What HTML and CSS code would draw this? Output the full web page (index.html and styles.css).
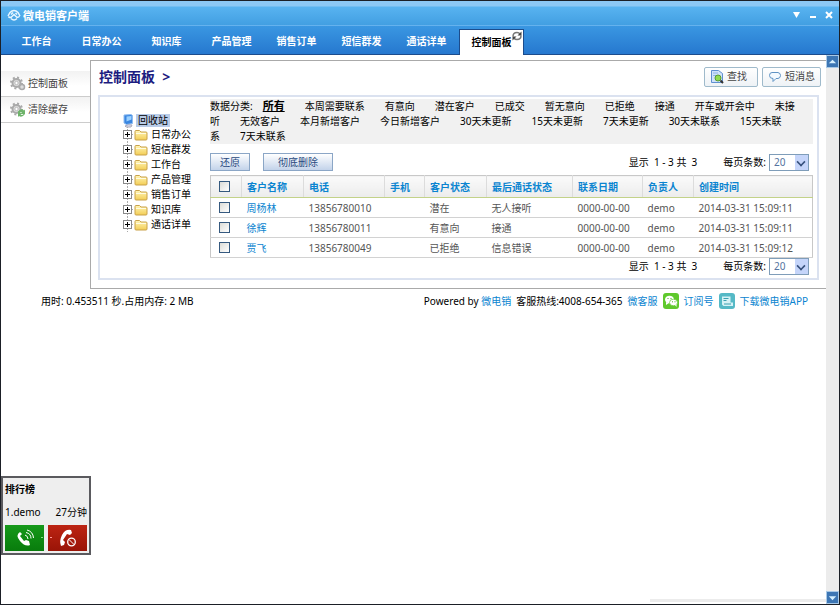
FILE: index.html
```html
<!DOCTYPE html>
<html lang="zh-CN">
<head>
<meta charset="utf-8">
<title>微电销客户端</title>
<link rel="stylesheet" href="styles.css">
</head>
<body>
<svg class="defs" aria-hidden="true">
  <defs>
    <linearGradient id="fold" x1="0" y1="0" x2="0" y2="1"><stop offset="0" stop-color="#fff6b8"/><stop offset="1" stop-color="#f3cd55"/></linearGradient>
    <symbol id="plus" viewBox="0 0 12 15">
      <path d="M5.500 0v3M5.500 12v3M10 7.500h2" stroke="#aaa" stroke-dasharray="1 1"/>
      <rect x="1.500" y="3.500" width="8" height="8" fill="#fff" stroke="#8a8a8a"/>
      <path d="M3 7.500h5M5.500 5v5" stroke="#000"/>
    </symbol>
    <symbol id="folder" viewBox="0 0 14 12">
      <path d="M1 10V2.500Q1 1.500 2 1.500h3.500l1.500 1.500h5q1 0 1 1V10q0 1-1 1H2q-1 0-1-1z" fill="url(#fold)" stroke="#c9a24a"/>
      <path d="M2 4.500h10" stroke="#fffbe0"/>
    </symbol>
    <symbol id="gear" viewBox="0 0 16 16">
      <circle cx="6.500" cy="7" r="4" fill="#ddd" stroke="#aaa" stroke-width="2"/>
      <circle cx="6.500" cy="7" r="5.500" fill="none" stroke="#aaa" stroke-width="2" stroke-dasharray="2 2.300"/>
      <circle cx="6.500" cy="7" r="1.700" fill="#fff" stroke="#bbb"/>
    </symbol>
  </defs>
</svg>
<div class="window">
  <header class="titlebar">
    <svg class="logo" viewBox="0 0 14 12"><path d="M1 7L3 3.500Q7-.5 11 3.500L13 7M1.500 7.500Q2.500 9 4.500 8L7 5.500 9.500 8Q11.500 9 12.500 7M4 9.500q3 3 6 0M4 5.500L6 3.500M10 5.500L8.500 4" fill="none" stroke="#e8f6ff" stroke-width="1.500"/></svg>
    <h1 class="app-name">微电销客户端</h1>
    <div class="win-buttons">
      <button type="button" aria-label="菜单"><svg viewBox="0 0 8 8"><path d="M0 1h7L3.500 7z" fill="#fff"/></svg></button>
      <button type="button" aria-label="最小化"><svg viewBox="0 0 8 8"><path d="M1 6h6" stroke="#fff" stroke-width="2"/></svg></button>
      <button type="button" aria-label="关闭"><svg viewBox="0 0 8 8"><path d="M1 1l6 6M7 1L1 7" stroke="#fff" stroke-width="2"/></svg></button>
    </div>
  </header>
  <nav class="tabs">
    <a href="#">工作台</a>
    <a href="#">日常办公</a>
    <a href="#">知识库</a>
    <a href="#">产品管理</a>
    <a href="#">销售订单</a>
    <a href="#">短信群发</a>
    <a href="#">通话详单</a>
    <a href="#" class="active">控制面板<svg class="refresh" viewBox="0 0 10 10"><path d="M1 5.500Q1 1.500 5 1.500q2 0 3 1.500M9 4.500Q9 8.500 5 8.500 3 8.500 2 7" fill="none" stroke="#777" stroke-width="1.500"/><path d="M9.500.5v4h-4zM.5 9.500v-4h4z" fill="#444"/></svg></a>
  </nav>
  <div class="viewport">
    <div class="page">
      <div class="columns">
        <aside class="side">
          <a href="#"><svg viewBox="0 0 16 16"><use href="#gear"/><circle cx="12" cy="11" r="2.500" fill="#ddd" stroke="#aaa" stroke-width="1.500"/></svg>控制面板</a>
          <a href="#"><svg viewBox="0 0 16 16"><use href="#gear"/><path d="M7.500 10q3.500-4.500 6.500-1.500l1-1v4.500h-4.500l1.500-1.500Q10.500 9.500 9 11.500zM15 12q-3 4-6 2l-1 1V11h4l-1.500 1.500q2 1 3-.5z" fill="#6eb36a"/></svg>清除缓存</a>
        </aside>
        <main class="panel">
          <div class="panel-head">
            <h2>控制面板&nbsp; &gt;</h2>
            <button type="button" class="tool"><svg viewBox="0 0 14 15"><path d="M1.500 1.500h7l4 3v9h-11z" fill="#cfe2fa" stroke="#5f8fd0"/><path d="M3 4h5M3 6.500h3" stroke="#8fb4e6"/><circle cx="8" cy="9" r="3" fill="#8fdc4e" stroke="#5a9a35"/><path d="M10.500 11.500l2.500 2.500" stroke="#333" stroke-width="2"/></svg>查找</button>
            <button type="button" class="tool"><svg viewBox="0 0 14 15"><path d="M4 3.500h6q2.500.5 2.500 3T10 9.500H8L5 12.500v-3Q1.500 9.500 1.500 6.500T4 3.500z" fill="#f4faff" stroke="#5f93c4"/></svg>短消息</button>
          </div>
          <div class="box">
            <div class="tree">
              <div class="root"><svg viewBox="0 0 12 14"><path d="M2 1l7-0.500 1.500 1v8l-6 1L2 9z" fill="#3a86e0" stroke="#8fbcf0"/><path d="M4.500 2.500l5-.5v3.500l-5 2z" fill="#9ad0ff"/><path d="M3 12q3-2 7-1l-1 2H4z" fill="#dde" stroke="#aab"/></svg><span>回收站</span></div>
              <ul>
                <li><svg class="p"><use href="#plus"/></svg><svg class="f"><use href="#folder"/></svg>日常办公</li>
                <li><svg class="p"><use href="#plus"/></svg><svg class="f"><use href="#folder"/></svg>短信群发</li>
                <li><svg class="p"><use href="#plus"/></svg><svg class="f"><use href="#folder"/></svg>工作台</li>
                <li><svg class="p"><use href="#plus"/></svg><svg class="f"><use href="#folder"/></svg>产品管理</li>
                <li><svg class="p"><use href="#plus"/></svg><svg class="f"><use href="#folder"/></svg>销售订单</li>
                <li><svg class="p"><use href="#plus"/></svg><svg class="f"><use href="#folder"/></svg>知识库</li>
                <li><svg class="p"><use href="#plus"/></svg><svg class="f"><use href="#folder"/></svg>通话详单</li>
              </ul>
            </div>
            <div class="data">
              <div class="filter"><span class="label">数据分类:</span><a href="#" class="current">所有</a><a href="#">本周需要联系</a><a href="#">有意向</a><a href="#">潜在客户</a><a href="#">已成交</a><a href="#">暂无意向</a><a href="#">已拒绝</a><a href="#">接通</a><a href="#">开车或开会中</a><a href="#">未接<br>听</a><a href="#">无效客户</a><a href="#">本月新增客户</a><a href="#">今日新增客户</a><a href="#">30天未更新</a><a href="#">15天未更新</a><a href="#">7天未更新</a><a href="#">30天未联系</a><a href="#">15天未联<br>系</a><a href="#">7天未联系</a></div>
              <div class="bar">
                <button type="button" class="btn">还原</button>
                <button type="button" class="btn wide">彻底删除</button>
                <div class="pager"><span>显示&nbsp; 1 - 3 共&nbsp; 3</span><label for="size1">每页条数:</label><span class="pick"><select id="size1"><option>20</option></select></span></div>
              </div>
              <table>
                <colgroup><col class="c-check"><col class="c-name"><col class="c-phone"><col class="c-mobile"><col class="c-name"><col class="c-last"><col class="c-date"><col class="c-owner"><col></colgroup>
                <thead><tr><th><input type="checkbox" aria-label="全选"></th><th>客户名称</th><th>电话</th><th>手机</th><th>客户状态</th><th>最后通话状态</th><th>联系日期</th><th>负责人</th><th>创建时间</th></tr></thead>
                <tbody>
                  <tr><td><input type="checkbox" aria-label="周杨林"></td><td><a href="#">周杨林</a></td><td>13856780010</td><td></td><td>潜在</td><td>无人接听</td><td>0000-00-00</td><td>demo</td><td>2014-03-31 15:09:11</td></tr>
                  <tr><td><input type="checkbox" aria-label="徐辉"></td><td><a href="#">徐辉</a></td><td>13856780011</td><td></td><td>有意向</td><td>接通</td><td>0000-00-00</td><td>demo</td><td>2014-03-31 15:09:11</td></tr>
                  <tr><td><input type="checkbox" aria-label="贾飞"></td><td><a href="#">贾飞</a></td><td>13856780049</td><td></td><td>已拒绝</td><td>信息错误</td><td>0000-00-00</td><td>demo</td><td>2014-03-31 15:09:12</td></tr>
                </tbody>
              </table>
              <div class="pager"><span>显示&nbsp; 1 - 3 共&nbsp; 3</span><label for="size2">每页条数:</label><span class="pick"><select id="size2"><option>20</option></select></span></div>
            </div>
          </div>
        </main>
      </div>
      <footer class="foot">
        <span class="usage">用时: 0.453511 秒.占用内存: 2 MB</span>
        <span>Powered by <a href="#">微电销</a></span>
        <span>客服热线:4008-654-365</span>
        <a href="#">微客服</a>
        <svg viewBox="0 0 16 16"><rect width="16" height="16" rx="3" fill="#5fc92c"/><ellipse cx="6.500" cy="6.500" rx="4.500" ry="3.800" fill="#fff"/><path d="M3 9v3l3-2z" fill="#fff"/><ellipse cx="10.500" cy="9.500" rx="4" ry="3.300" fill="#fff" stroke="#5fc92c" stroke-width=".7"/><path d="M12 12l1.500 2V11z" fill="#fff"/><path d="M4.500 5.500h1M7.500 5.500h1M9 8.800h1M11.500 8.800h1" stroke="#4bab20"/></svg>
        <a href="#">订阅号</a>
        <svg viewBox="0 0 16 16"><rect width="16" height="16" rx="3" fill="#55b9c6"/><path d="M3 3.500h8.500v6H14V13H4.500L3 11.500z" fill="#d5f2f6"/><path d="M4.500 5.500h5M4.500 7.500h3M5 11h7" stroke="#3aa0b0"/></svg>
        <a href="#">下载微电销APP</a>
      </footer>
      <div class="strip"></div>
    </div>
    <div class="scroll">
      <button type="button" aria-label="向上"><svg viewBox="0 0 12 12"><path d="M2 8h8L6 4z" fill="#d6f0ff"/></svg></button>
      <button type="button" aria-label="向下"><svg viewBox="0 0 12 12"><path d="M2 4.500h8L6 9z" fill="#d6f0ff"/></svg></button>
    </div>
  </div>
  <section class="rank">
    <h3>排行榜</h3>
    <div class="score"><span>1.demo</span><span>27分钟</span></div>
    <div class="calls">
      <button type="button" class="call" aria-label="拨打"><svg viewBox="0 0 39 26"><path d="M15 7q-5 3 0 9t10 4l-1-4-3-1-2 1-4-5 2-2z" fill="#fff"/><path d="M20 10q3 1 3 4M21 7.500q5 1 5 6M22 5q6 1.500 6.500 8" fill="none" stroke="#fff"/><path d="M36 12.500h2" stroke="#8d8"/></svg></button>
      <button type="button" class="hang" aria-label="挂断"><svg viewBox="0 0 39 26"><path d="M23 5q-6-1-9 5t-1 11l3-1 1-3-2-2 4-6 3 1 2-2z" fill="#fff"/><circle cx="23.500" cy="17" r="3.800" fill="none" stroke="#fff" stroke-width="1.300"/><path d="M21 14.500l5 5" stroke="#fff"/><path d="M2 12.500h2" stroke="#f99"/></svg></button>
    </div>
  </section>
</div>
</body>
</html>
```
FILE: styles.css
```css
* { box-sizing: border-box; }
body {
  margin: 0;
  font: 10px/15px "Noto Sans", "Noto Sans CJK SC", sans-serif;
  color: #000;
  background: #fff;
}
h1, h2, h3, ul { margin: 0; padding: 0; font-size: inherit; list-style: none; }
a { color: #0a84d0; text-decoration: none; }
button { font: inherit; margin: 0; padding: 0; border: 0; background: none; }
svg { display: block; flex: none; }
.defs { position: absolute; width: 0; height: 0; }
.window {
  position: relative;
  display: flex;
  flex-direction: column;
  min-height: 100vh;
  border: 1px solid #1b1f26;
}

.titlebar {
  display: flex;
  align-items: center;
  height: 25px;
  padding: 4px 6px 0 6px;
  color: #fff;
  background: linear-gradient(#8cc8f5 0 5px, #58b3f0 6px, #429fe2);
  border-bottom: 1px solid #65b2ee;
}
.logo { width: 14px; height: 12px; margin-right: 2px; }
.app-name { font-size: 11px; font-weight: 700; }
.win-buttons { display: flex; gap: 8px; margin-left: auto; }
.win-buttons svg { width: 8px; height: 8px; }

.tabs {
  display: flex;
  align-items: flex-end;
  height: 29px;
  padding-left: 3px;
  background: linear-gradient(#3a97e2, #2678cf);
  border-bottom: 1px solid #1c4c8c;
}
.tabs a {
  position: relative;
  width: 65px;
  font-weight: 700;
  line-height: 26px;
  text-align: center;
  color: #fff;
  white-space: nowrap;
}
.tabs .active {
  height: 26px;
  margin-bottom: -1px;
  line-height: 25px;
  border: 1px solid #1c4c8c;
  border-bottom: 0;
  background: #fff;
  color: #000;
}
.refresh { position: absolute; top: 1px; right: 1px; width: 10px; height: 10px; }

.viewport { display: flex; flex: 1; }
.page { display: flex; flex: 1; flex-direction: column; min-width: 0; }
.scroll {
  display: flex;
  flex-direction: column;
  justify-content: space-between;
  width: 13px;
  background: #ececec;
}
.scroll button { width: 13px; height: 13px; background: #3d76b4; border: 1px solid #a9c9e6; }
.scroll svg { width: 11px; height: 11px; }
.columns { display: flex; padding-top: 5px; }
.side { width: 89px; padding-top: 11px; }
.side a {
  display: flex;
  align-items: center;
  gap: 2px;
  height: 26px;
  padding-left: 9px;
  color: #444;
  background: linear-gradient(#f2f2f2, #fff 60%);
  border-bottom: 1px solid #ccc;
}
.side svg { width: 16px; height: 16px; }

.panel {
  flex: 1;
  min-width: 0;
  padding-bottom: 8px;
  border: 1px solid #aaa;
  border-width: 1px 0 1px 1px;
}
.panel-head { display: flex; align-items: center; gap: 4px; height: 31px; padding: 0 5px 0 8px; }
.panel-head h2 { margin-right: auto; font-size: 14px; color: #1c1c80; }
.tool {
  display: flex;
  align-items: center;
  gap: 3px;
  height: 20px;
  padding: 0 5px 0 5px;
  color: #444;
  background: linear-gradient(#fff, #eef2f6);
  border: 1px solid #9fbacb;
  border-radius: 2px;
}
.tool:first-of-type { padding-right: 10px; }
.tool svg { width: 14px; height: 15px; }

.box {
  display: flex;
  margin: 3px 7px 0;
  padding: 2px 4px 3px 1px;
  border: 2px solid #dbe2f0;
}
.tree { width: 109px; padding: 15px 0 0 21px; }
.root { display: flex; align-items: center; gap: 2px; height: 13px; }
.root svg { width: 12px; height: 14px; }
.root span { padding: 0 2px; line-height: 13px; background: #b9cce8; }
.tree li { display: flex; align-items: center; height: 15px; }
.tree .p { width: 12px; height: 15px; }
.tree .f { width: 14px; height: 12px; margin-right: 3px; }

.data { flex: 1; min-width: 0; }
.filter { background: #f1f1f1; white-space: nowrap; line-height: 15px; }
.filter a { margin-right: 20px; color: #000; }
.filter .label { margin-right: 10px; }
.filter .current { font-size: 11px; font-weight: 700; text-decoration: underline; line-height: 14px; }
.bar { display: flex; align-items: center; gap: 13px; height: 18px; margin: 9px 0 4px; }
.bar .pager { margin-left: auto; }
.btn {
  height: 18px;
  padding: 0 9px;
  color: #2a4a80;
  background: linear-gradient(#fff, #c3d3ea);
  border: 1px solid #8ba6c6;
}
.btn.wide { padding: 0 14px; }
.pager { display: flex; align-items: center; justify-content: flex-end; height: 17px; padding-right: 4px; }
.pager label { margin: 0 3px 0 26px; }
.pick { position: relative; display: flex; }
.pick::after {
  content: "";
  position: absolute;
  right: 4px;
  top: 4px;
  width: 6px;
  height: 6px;
  border: solid #36507c;
  border-width: 0 2px 2px 0;
  rotate: 45deg;
  scale: 0.8;
  pointer-events: none;
}
select {
  appearance: none;
  width: 40px;
  height: 17px;
  padding: 0 4px;
  font: inherit;
  color: #5574a0;
  border: 1px solid #7f9db9;
  border-radius: 0;
  background: linear-gradient(#c5d5fa, #c5d5fa) right 0 / 13px 100% no-repeat #fff;
}

table { width: 100%; table-layout: fixed; border-collapse: collapse; border: 1px solid #c8c8c8; }
.c-check { width: 31px; }
.c-name { width: 62px; }
.c-phone { width: 81px; }
.c-mobile { width: 40px; }
.c-last { width: 86px; }
.c-date { width: 70px; }
.c-owner { width: 51px; }
th, td { padding: 0 0 0 5px; text-align: left; white-space: nowrap; line-height: 18px; }
th {
  height: 22px;
  color: #0a84d0;
  background: linear-gradient(#fafafa, #ececec);
  border-bottom: 1px solid #c3d289;
}
th + th { border-left: 1px solid #dcdcdc; }
td { height: 20px; color: #555; border-bottom: 1px solid #d2d2d2; }
th:first-child, td:first-child { padding-left: 8px; }
input[type="checkbox"] {
  appearance: none;
  display: block;
  width: 11px;
  height: 11px;
  margin: 0;
  border: 1px solid #35597f;
  background: linear-gradient(135deg, #dcdcd7, #fff);
}

.foot { display: flex; align-items: center; gap: 5px; height: 24px; padding: 0 18px 0 40px; white-space: nowrap; }
.foot .usage { margin-right: auto; }
.foot svg { width: 16px; height: 16px; }
.strip { align-self: flex-end; width: 176px; height: 3px; margin: auto 0 2px; background: #ececec; }

.rank {
  position: absolute;
  left: 0;
  bottom: 49px;
  width: 90px;
  padding: 4px 2px 2px;
  background: #eee;
  border: 2px solid #5a5a5e;
}
.score { display: flex; justify-content: space-between; margin: 8px 0 5px; }
.calls { display: flex; gap: 4px; }
.calls button { flex: 1; }
.calls svg { width: 100%; height: 26px; }
.call { background: linear-gradient(#16991a, #087c0c); }
.hang { background: linear-gradient(#bd2413, #991407); }
```
